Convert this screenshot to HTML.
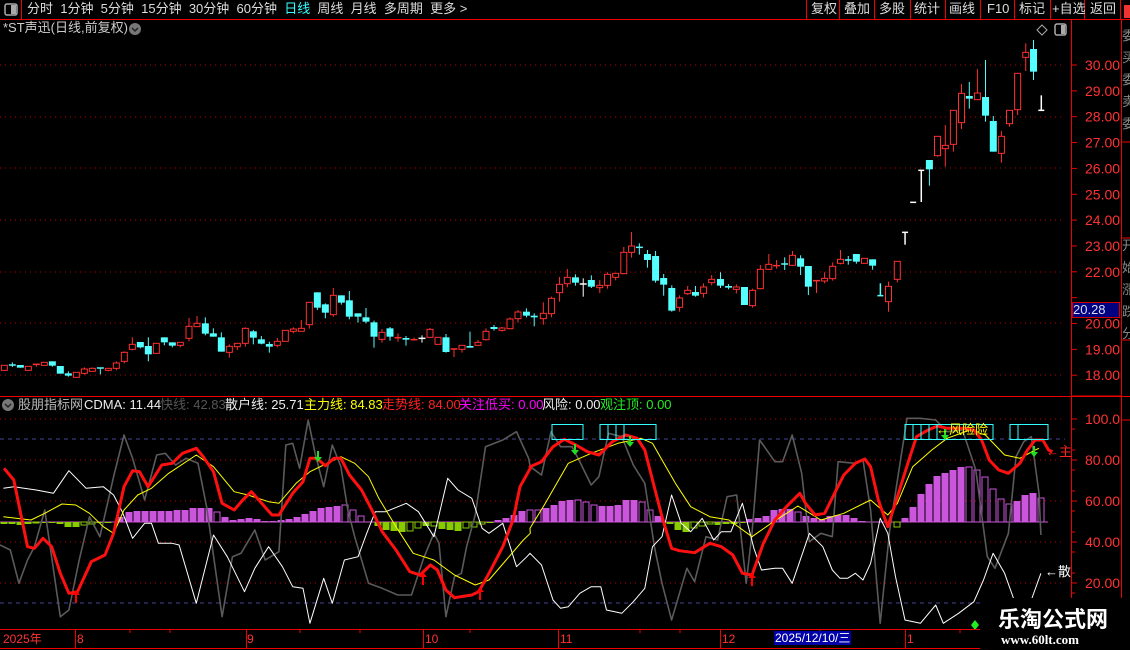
<!DOCTYPE html>
<html><head><meta charset="utf-8"><style>
html,body{margin:0;padding:0;background:#000;width:1130px;height:650px;overflow:hidden}
body{position:relative;font-family:"Liberation Sans","Noto Sans CJK SC",sans-serif;font-size:12px;color:#ddd}
.t{position:absolute;white-space:nowrap;line-height:14px}
svg{position:absolute;left:0;top:0}
</style></head><body>
<svg id="s" width="1130" height="650" xmlns="http://www.w3.org/2000/svg"></svg>
<div class="t" style="left:27px;top:2px;font-size:13px;color:#ddd;word-spacing:0">分时&nbsp;&nbsp;1分钟&nbsp;&nbsp;5分钟&nbsp;&nbsp;15分钟&nbsp;&nbsp;30分钟&nbsp;&nbsp;60分钟&nbsp;&nbsp;<span style="color:#3ff">日线</span>&nbsp;&nbsp;周线&nbsp;&nbsp;月线&nbsp;&nbsp;多周期&nbsp;&nbsp;更多 &gt;</div>
<div class="t" style="left:811px;top:2px;font-size:13px">复权</div>
<div class="t" style="left:844px;top:2px;font-size:13px">叠加</div>
<div class="t" style="left:879px;top:2px;font-size:13px">多股</div>
<div class="t" style="left:914px;top:2px;font-size:13px">统计</div>
<div class="t" style="left:949px;top:2px;font-size:13px">画线</div>
<div class="t" style="left:987px;top:2px;font-size:13px">F10</div>
<div class="t" style="left:1019px;top:2px;font-size:13px">标记</div>
<div class="t" style="left:1052px;top:2px;font-size:13px">+自选</div>
<div class="t" style="left:1090px;top:2px;font-size:13px">返回</div>
<div class="t" style="left:3px;top:21px;font-size:13px;color:#ccc">*ST声迅(日线,前复权)</div>
<div class="t" style="left:18px;top:398px;color:#bbb;font-size:13px">股朋指标网</div>
<div class="t" style="left:84px;top:398px;color:#eee;font-size:13px">CDMA: 11.44</div>
<div class="t" style="left:160px;top:398px;color:#555;font-size:13px">快线: 42.83</div>
<div class="t" style="left:225px;top:398px;color:#eee;font-size:13px">散户线: 25.71</div>
<div class="t" style="left:304px;top:398px;color:#ff0;font-size:13px">主力线: 84.83</div>
<div class="t" style="left:382px;top:398px;color:#f22;font-size:13px">走势线: 84.00</div>
<div class="t" style="left:459px;top:398px;color:#f0f;font-size:13px">关注低买: 0.00</div>
<div class="t" style="left:542px;top:398px;color:#eee;font-size:13px">风险: 0.00</div>
<div class="t" style="left:600px;top:398px;color:#2e2;font-size:13px">观注顶: 0.00</div>
<div class="t" style="left:936px;top:423px;color:#ff0;font-size:13px">←风险险</div>
<div class="t" style="left:1046px;top:445px;color:#f22;font-size:13px">←主</div>
<div class="t" style="left:1045px;top:565px;color:#fff;font-size:13px">←散</div>
<div class="t" style="left:3px;top:632px;color:#f33;font-size:12px">2025年</div>
<div class="t" style="left:77px;top:632px;color:#f33">8</div>
<div class="t" style="left:247px;top:632px;color:#f33">9</div>
<div class="t" style="left:425px;top:632px;color:#f33">10</div>
<div class="t" style="left:560px;top:632px;color:#f33">11</div>
<div class="t" style="left:722px;top:632px;color:#f33">12</div>
<div class="t" style="left:774px;top:631px;color:#fff;background:#0000a8;padding:0 1px">2025/12/10/三</div>
<div class="t" style="left:907px;top:632px;color:#f33">1</div>
<div class="t" style="left:1072px;top:302px;width:46px;height:14px;background:#000080;color:#dde;font-size:13px;border:1px solid #c00">20.28</div>
<div class="t" style="left:980px;top:598px;width:150px;height:52px;background:#000"></div>
<div class="t" style="left:998px;top:606px;color:#fff;font-size:22px;line-height:28px;font-weight:bold">乐淘公式网</div>
<div class="t" style="left:1001px;top:633px;color:#fff;font-size:13px;font-family:'Liberation Serif',serif;font-weight:bold">www.60lt.com</div>
<script>
const s=[];const R='#e00';
function L(x1,y1,x2,y2,c,w,d){s.push(`<line x1="${x1}" y1="${y1}" x2="${x2}" y2="${y2}" stroke="${c}" stroke-width="${w||1}" ${d?`stroke-dasharray="${d}"`:''}/>`);}
function P(pts,c,w){s.push(`<polyline points="${pts.map(p=>p[0].toFixed(1)+','+p[1].toFixed(1)).join(' ')}" fill="none" stroke="${c}" stroke-width="${w}" stroke-linejoin="round"/>`);}
const z6=(a)=>[a[0]/3,230+a[1]/3], z7=(a)=>[520+a[0]/2.958,30+a[1]/3], z8=(a)=>[a[0]/2.904,400+a[1]/3], z9=(a)=>[530+a[0]/2.613,400+a[1]/3];
L(0,19.5,1130,19.5,R);L(21.5,0,21.5,19,R);
s.push(`<rect x="5" y="4" width="12" height="11" rx="2" fill="none" stroke="#aaa" stroke-width="1.5"/><rect x="11" y="5" width="5" height="9" fill="#aaa"/>`);
[806,839,874,910,945,980,1014,1050,1084,1120].forEach(x=>L(x+.5,0,x+.5,19,R));
s.push(`<rect x="1124" y="5" width="6" height="13" fill="#e33"/>`);
L(1071.5,19,1071.5,598,R);L(1121.5,19,1121.5,650,R);L(1071,396,1121,396,R);
L(0,396.5,1130,396.5,R);
s.push(`<circle cx="135" cy="29" r="6" fill="#777"/><path d="M132 28 l3 3 l3 -3" stroke="#222" stroke-width="1.5" fill="none"/>`);
s.push(`<path d="M1042 25 l5 5 l-5 5 l-5 -5z" fill="none" stroke="#aaa"/><rect x="1055" y="24" width="11" height="11" rx="2" fill="none" stroke="#aaa" stroke-width="1.5"/><rect x="1061" y="25" width="4" height="9" fill="#aaa"/>`);
s.push(`<circle cx="8" cy="405" r="6" fill="#777"/><path d="M5 404 l3 3 l3 -3" stroke="#222" stroke-width="1.5" fill="none"/>`);
[65,117,168,220,272,323,375].forEach(y=>L(0,y,1065,y,'#b00',1,'1 4'));
for(let p=18;p<=30;p++){const y=65+(30-p)*25.85;L(1071,y,1077,y,R);if(p!==21)s.push(`<text x="1085" y="${y+5}" fill="#f33" font-size="14" font-family="Liberation Sans">${p}.00</text>`);}
['委','买','委','卖','委'].forEach((c,i)=>s.push(`<text x="1122" y="${40+i*22}" fill="#888" font-size="13">${c}</text>`));
['开','始','涨','跌','分'].forEach((c,i)=>s.push(`<text x="1122" y="${250+i*22}" fill="#888" font-size="13">${c}</text>`));
L(1121,142,1130,142,R);L(1121,238,1130,238,R);L(1121,340,1130,340,R);L(1121,420,1130,420,R);
const C6=[[13,406,421,406,421,'r'],[37,405,408,397,411,'c'],[61,405,413,405,413,'c'],[85,409,421,409,421,'r'],[109,403,407,403,410,'r'],[133,397,406,397,406,'r'],[157,394,407,394,410,'c'],[181,408,431,408,431,'c'],[205,430,437,424,440,'c'],[229,427,442,427,442,'r'],[253,417,430,412,434,'r'],[277,415,424,412,424,'r'],[301,414,418,414,433,'c'],[325,415,421,415,424,'r'],[349,399,415,394,421,'r'],[373,367,394,364,400,'r'],[397,343,358,322,361,'r'],[421,336,352,336,355,'c'],[445,348,373,322,394,'c'],[469,340,370,340,370,'r'],[493,322,337,322,346,'c'],[517,337,347,337,352,'c'],[541,337,346,337,352,'r'],[567,289,325,264,334,'r'],[591,280,290,258,290,'r'],[616,280,311,262,316,'c'],[640,310,320,295,320,'c'],[664,322,365,307,365,'c'],[688,349,367,343,383,'r'],[712,340,350,340,360,'r'],[736,295,340,292,350,'r'],[760,304,323,300,343,'c'],[784,328,341,318,343,'c'],[808,342,350,335,368,'c'],[832,334,346,324,352,'r'],[856,301,334,301,334,'r'],[880,297,304,292,310,'r'],[904,295,304,270,304,'r'],[928,217,284,217,296,'r'],[952,187,233,187,240,'c'],[976,223,248,220,265,'c'],[1000,196,254,174,260,'r'],[1024,196,218,196,224,'c'],[1048,211,260,183,268,'c'],[1074,250,260,250,278,'c'],[1098,262,275,234,280,'c'],[1122,277,320,272,353,'c'],[1146,307,328,297,338,'r'],[1170,295,320,291,332,'c'],[1194,323,327,310,335,'r'],[1218,324,329,318,347,'c'],[1242,329,331,323,331,'r'],[1266,325,325,316,338,'w'],[1290,298,322,294,322,'r'],[1314,322,343,322,343,'r'],[1338,322,366,312,368,'c'],[1362,357,361,357,381,'r'],[1386,346,358,346,368,'r'],[1410,348,353,305,353,'c'],[1434,337,346,330,346,'r'],[1458,304,329,295,332,'r'],[1482,291,297,285,302,'c'],[1506,294,301,291,305,'r'],[1530,267,296,262,298,'r'],[1554,246,266,240,278,'r']];
const C7=[[19,845,857,835,862,'c'],[42,857,862,850,889,'c'],[69,850,866,817,884,'r'],[93,805,851,800,862,'r'],[117,763,788,741,815,'r'],[140,742,761,717,772,'r'],[164,742,758,733,767,'c'],[187,762,762,745,800,'w'],[211,750,770,736,774,'c'],[236,766,773,750,789,'r'],[259,733,766,727,776,'r'],[283,730,742,730,751,'r'],[307,667,731,651,733,'r'],[330,648,667,606,683,'r'],[353,652,652,640,674,'c'],[377,672,690,660,713,'c'],[401,678,752,663,758,'c'],[425,744,764,732,797,'c'],[449,774,842,766,845,'c'],[472,804,832,796,845,'r'],[496,781,791,768,795,'r'],[519,786,797,768,800,'c'],[543,771,790,760,803,'r'],[567,748,758,735,766,'r'],[593,747,767,727,774,'c'],[617,768,773,762,778,'c'],[640,771,778,763,790,'r'],[664,771,825,771,825,'c'],[688,781,827,776,833,'r'],[711,718,776,705,778,'r'],[736,703,718,672,720,'r'],[759,707,709,690,716,'r'],[783,702,702,682,720,'c'],[806,676,706,663,708,'r'],[830,685,710,676,735,'c'],[853,708,770,708,795,'c'],[877,752,755,752,789,'r'],[901,745,753,727,760,'r'],[925,709,746,697,752,'r'],[948,688,700,660,703,'r'],[971,690,690,678,704,'c'],[995,672,695,672,701,'c'],[1019,685,700,685,700,'r'],[1043,688,707,688,719,'c'],[1090,769,815,755,845,'r'],[1116,694,748,694,757,'r'],[1211,390,418,390,467,'c'],[1235,319,377,319,380,'r'],[1258,346,356,285,410,'r'],[1282,241,343,241,365,'r'],[1306,190,278,162,297,'r'],[1329,198,206,156,236,'c'],[1353,189,209,117,209,'r'],[1377,201,257,90,275,'c'],[1400,273,365,258,365,'c'],[1424,319,370,303,398,'r'],[1448,241,281,241,290,'r'],[1472,130,239,130,255,'r'],[1496,67,82,40,123,'r'],[1519,57,125,30,150,'c']];
function candle(c,f){const a=f([c[0],c[1]]),b=f([c[0],c[2]]),wt=f([c[0],c[3]])[1],wb=f([c[0],c[4]])[1];const x=a[0];
 const col=c[5]=='r'?'#ff3030':c[5]=='c'?'#54ffff':'#fff';
 L(x,wt,x,Math.max(wb,a[1]),col);
 let h=b[1]-a[1];
 if(h<1.5){L(x-3.5,a[1],x+3.5,a[1],col,1.5);return;}
 if(c[5]=='r')s.push(`<rect x="${x-3}" y="${a[1]}" width="6" height="${h}" fill="#000" stroke="${col}" stroke-width="1"/>`);
 else s.push(`<rect x="${x-3.5}" y="${a[1]}" width="7" height="${h}" fill="${col}"/>`);}
C6.forEach(c=>candle(c,z6));C7.forEach(c=>candle(c,z7));
[[1139,607,644,1],[1187,421,516,1],[1542,196,241,0]].forEach(t=>{const a=z7([t[0],t[1]]),b=z7([t[0],t[2]]);L(a[0],a[1],b[0],b[1],'#fff',1.5);const y=t[3]?a[1]:b[1];L(a[0]-3,y,a[0]+3,y,'#fff',1.5);});
{const a=z7([1163,517]);L(a[0]-3,a[1],a[0]+3,a[1],'#fff',1.5);}
{const a=z7([1066,760]),b=z7([1066,797]);L(a[0],a[1],b[0],b[1],'#54ffff',1.5);L(b[0]-3,b[1],b[0]+3,b[1],'#54ffff',1.5);}
[419,460,501,542,583].forEach(y=>L(0,y,1065,y,'#b00',1,'1 4'));
[439,603].forEach(y=>L(0,y,1065,y,'#449',1,'4 4'));
[[100,'100.0'],[80,'80.00'],[60,'60.00'],[40,'40.00'],[20,'20.00']].forEach(v=>{const y=419+(100-v[0])*2.05;L(1071,y,1077,y,R);s.push(`<text x="1085" y="${y+5}" fill="#f33" font-size="14">${v[1]}</text>`);});
[429,450,470,491,511,532,552,573,593].forEach(y=>L(1071,y,1075,y,R));
L(0,522,1048,522,'#c5c',1);
const B=[[4,524],[12,524],[20,525],[28,524],[36,523,1],[44,523],[52,523],[60,524],[68,527],[76,527],[84,525,1],[92,524,1],[100,523],[108,523],[120,517],[129,512],[137,511],[145,511],[153,511],[161,511],[169,511],[177,510],[185,510],[193,508],[201,508],[209,508],[217,512,1],[225,517],[233,520],[241,519],[249,518],[257,519],[265,521],[273,521],[281,520],[289,519],[297,517],[305,514],[313,511],[321,508],[329,507],[337,506],[345,505,1],[353,510,1],[361,516,1],[378,526],[386,530],[394,531],[402,532],[410,531,1],[418,528,1],[426,526],[434,526,1],[442,529],[450,530],[458,531],[466,528,1],[474,527,1],[482,524,1],[490,523],[498,520],[506,518],[514,515],[522,511],[530,510,1],[538,510,1],[546,508],[554,505],[562,501],[570,500],[578,500,1],[586,502,1],[594,505,1],[602,506],[610,506],[618,505],[626,500],[634,500],[642,502,1],[650,510,1],[658,516],[670,524],[678,530],[686,532],[694,528,1],[702,526,1],[710,524,1],[718,525],[726,524],[734,524],[742,523],[750,519],[758,518],[766,516],[774,510],[782,509],[790,509],[798,512,1],[806,516],[814,518],[822,519],[830,516],[838,515],[846,515],[854,518],[862,521],[897,527,1],[905,518],[913,507],[921,494],[929,484],[937,476],[945,473],[953,470],[961,467],[969,467,1],[977,470,1],[985,477,1],[993,489,1],[1001,499,1],[1009,504,1],[1017,501],[1025,495],[1033,493],[1041,498,1]];
B.forEach(b=>{const g=b[1]>522;const col=g?'#88cc00':'#cc55dd';const y=Math.min(b[1],522),h=Math.max(Math.abs(b[1]-522),1);
 if(b[2])s.push(`<rect x="${b[0]-3}" y="${y}" width="6" height="${h}" fill="none" stroke="${col}"/>`);else s.push(`<rect x="${b[0]-3.5}" y="${y}" width="7" height="${h}" fill="${col}"/>`);});
const G8=[[0,435],[30,450],[55,550],[80,480],[100,440],[130,330],[175,650],[200,630],[230,480],[260,350],[290,410],[330,230],[360,105],[385,175],[420,300],[455,165],[480,160],[510,195],[540,175],[575,190],[600,320],[645,650],[675,470],[700,460],[740,390],[770,480],[810,455],[830,135],[850,130],[870,205],[895,60],[915,160],[940,260],[965,135],[990,200],[1010,330],[1030,410],[1070,550],[1110,565],[1155,585],[1195,585],[1230,475],[1260,400],[1275,430],[1295,650],[1320,530],[1340,520],[1355,440],[1380,345],[1410,140],[1460,120],[1500,95],[1535,175],[1540,200]].map(z8);
const G9=[[30,225],[55,95],[80,140],[110,140],[130,185],[160,255],[180,230],[205,100],[240,110],[270,195],[300,250],[325,440],[345,550],[370,660],[410,505],[430,545],[460,410],[490,420],[515,290],[540,285],[565,550],[580,400],[600,120],[640,185],[660,185],[685,105],[710,220],[730,425],[760,400],[790,410],[805,185],[850,190],[870,180],[890,330],[915,670],[940,390],[985,55],[1020,55],[1060,60],[1090,95],[1130,90],[1165,210],[1195,470],[1215,505],[1250,400],[1270,170],[1290,125],[1310,110],[1330,280],[1335,405]].map(z9);
P(G8.concat(G9),'#5a5a5a',1.6);
const W8=[[10,265],[40,260],[70,265],[105,270],[155,280],[200,212],[250,265],[300,260],[330,285],[355,335],[385,415],[420,370],[440,370],[460,430],[500,430],[520,435],[570,610],[620,405],[660,470],[710,575],[740,505],[780,440],[820,500],[850,560],[880,565],[900,670],[940,535],[965,610],[1000,480],[1040,470],[1065,400],[1090,335],[1120,335],[1180,310],[1215,335],[1260,410],[1300,235],[1330,270],[1370,295],[1400,385],[1420,400],[1460,370],[1500,500],[1530,470]].map(z8);
const W9=[[0,460],[30,495],[60,600],[80,625],[100,620],[130,580],[160,560],[185,560],[200,630],[240,640],[270,605],[300,565],[320,440],[345,410],[370,285],[395,370],[420,395],[450,355],[480,420],[500,395],[525,395],[555,310],[585,445],[605,510],[640,505],[660,505],[685,550],[730,400],[765,440],[790,510],[810,535],[830,535],[850,520],[870,540],[890,490],[915,355],[935,400],[955,530],[980,660],[1020,670],[1060,615],[1080,670],[1120,640],[1160,605],[1185,540],[1210,460],[1240,520],[1265,600],[1310,600],[1335,520]].map(z9);
P(W8.concat(W9),'#fff',1);
const Y8=[[10,350],[90,360],[130,340],[180,312],[220,315],[260,340],[300,380],[330,400],[360,330],[400,285],[440,265],[490,220],[570,165],[620,200],[680,275],[720,285],[780,305],[810,310],[860,250],[900,215],[940,195],[990,170],[1030,190],[1070,230],[1100,295],[1150,380],[1200,460],[1260,480],[1320,525],[1380,555],[1420,540],[1470,480],[1520,420],[1540,400]].map(z8);
const Y9=[[0,385],[40,310],[100,190],[160,160],[230,130],[290,115],[320,130],[350,190],[380,250],[420,320],[470,350],[520,360],[580,410],[630,370],[700,318],[760,360],[820,340],[890,300],[935,345],[960,310],[1000,200],[1050,150],[1090,115],[1150,90],[1190,105],[1240,165],[1280,175],[1320,150],[1330,145]].map(z9);
P(Y8.concat(Y9),'#ffff00',1);
const R8=[[12,205],[40,240],[80,440],[100,445],[125,415],[150,440],[175,520],[200,580],[225,575],[265,485],[305,465],[330,400],[360,260],[385,212],[405,215],[430,260],[470,195],[500,190],[530,160],[570,145],[590,170],[620,215],[645,310],[680,330],[705,300],[730,275],[760,310],[790,345],[810,345],[850,280],[880,245],[900,175],[920,175],[945,197],[970,175],[990,175],[1015,225],[1050,270],[1080,330],[1110,395],[1150,450],[1190,515],[1220,525],[1250,495],[1270,510],[1295,570],[1320,593],[1370,585],[1390,575],[1420,520],[1460,440],[1490,360],[1510,260],[1540,205]].map(z8);
const R9=[[0,200],[30,185],[60,140],[90,118],[120,135],[150,155],[180,165],[215,125],[250,105],[280,115],[300,150],[320,240],[345,350],[370,445],[390,452],[430,458],[470,430],[500,440],[530,465],[555,520],[580,525],[610,430],[640,360],[670,320],[705,280],[720,310],[745,345],[770,340],[800,270],[820,225],[850,190],[875,177],[890,200],[910,300],[935,380],[960,290],[990,180],[1010,110],[1040,90],[1065,78],[1090,85],[1130,85],[1160,90],[1180,120],[1200,180],[1225,210],[1250,220],[1280,190],[1300,150],[1320,120],[1340,120],[1355,150],[1365,155]].map(z9);
P(R8.concat(R9),'#ff1010',3);
function box(x1,x2,div){s.push(`<rect x="${x1}" y="424.5" width="${x2-x1}" height="15" fill="none" stroke="#3ff" stroke-width="1"/>`);div.forEach(x=>L(x,424,x,439,'#3ff'));}
box(552,583,[]);box(600,656,[608,616,624]);box(905,993,[913,921,929,937]);box(1010,1048,[1018]);
function up(x,y){s.push(`<path d="M${x} ${y-8} l-4 5 h3 v8 h2 v-8 h3z" fill="#f00"/>`);}
function dn(x,y,c){s.push(`<path d="M${x} ${y+7} l-4 -5 h3 v-6 h2 v6 h3z" fill="${c}"/>`);}
up(76,598);up(423,580);up(480,595);up(752,581);
dn(318,455,'#2d2');dn(575,448,'#2d2');dn(630,440,'#2d2');dn(945,433,'#2d2');dn(1034,450,'#2d2');
s.push(`<path d="M975 620 l4 5 l-4 5 l-4 -5z" fill="#2e2"/>`);
L(0,629.5,1071,629.5,R);L(0,648.5,1130,648.5,R);
[75,246,423,558,720,905].forEach(x=>L(x+.5,629,x+.5,648,R));
[130,170,300,360,470,640,680,820,960].forEach(x=>L(x,629,x,633,R));
document.getElementById('s').innerHTML=s.join('');
</script>
</body></html>
